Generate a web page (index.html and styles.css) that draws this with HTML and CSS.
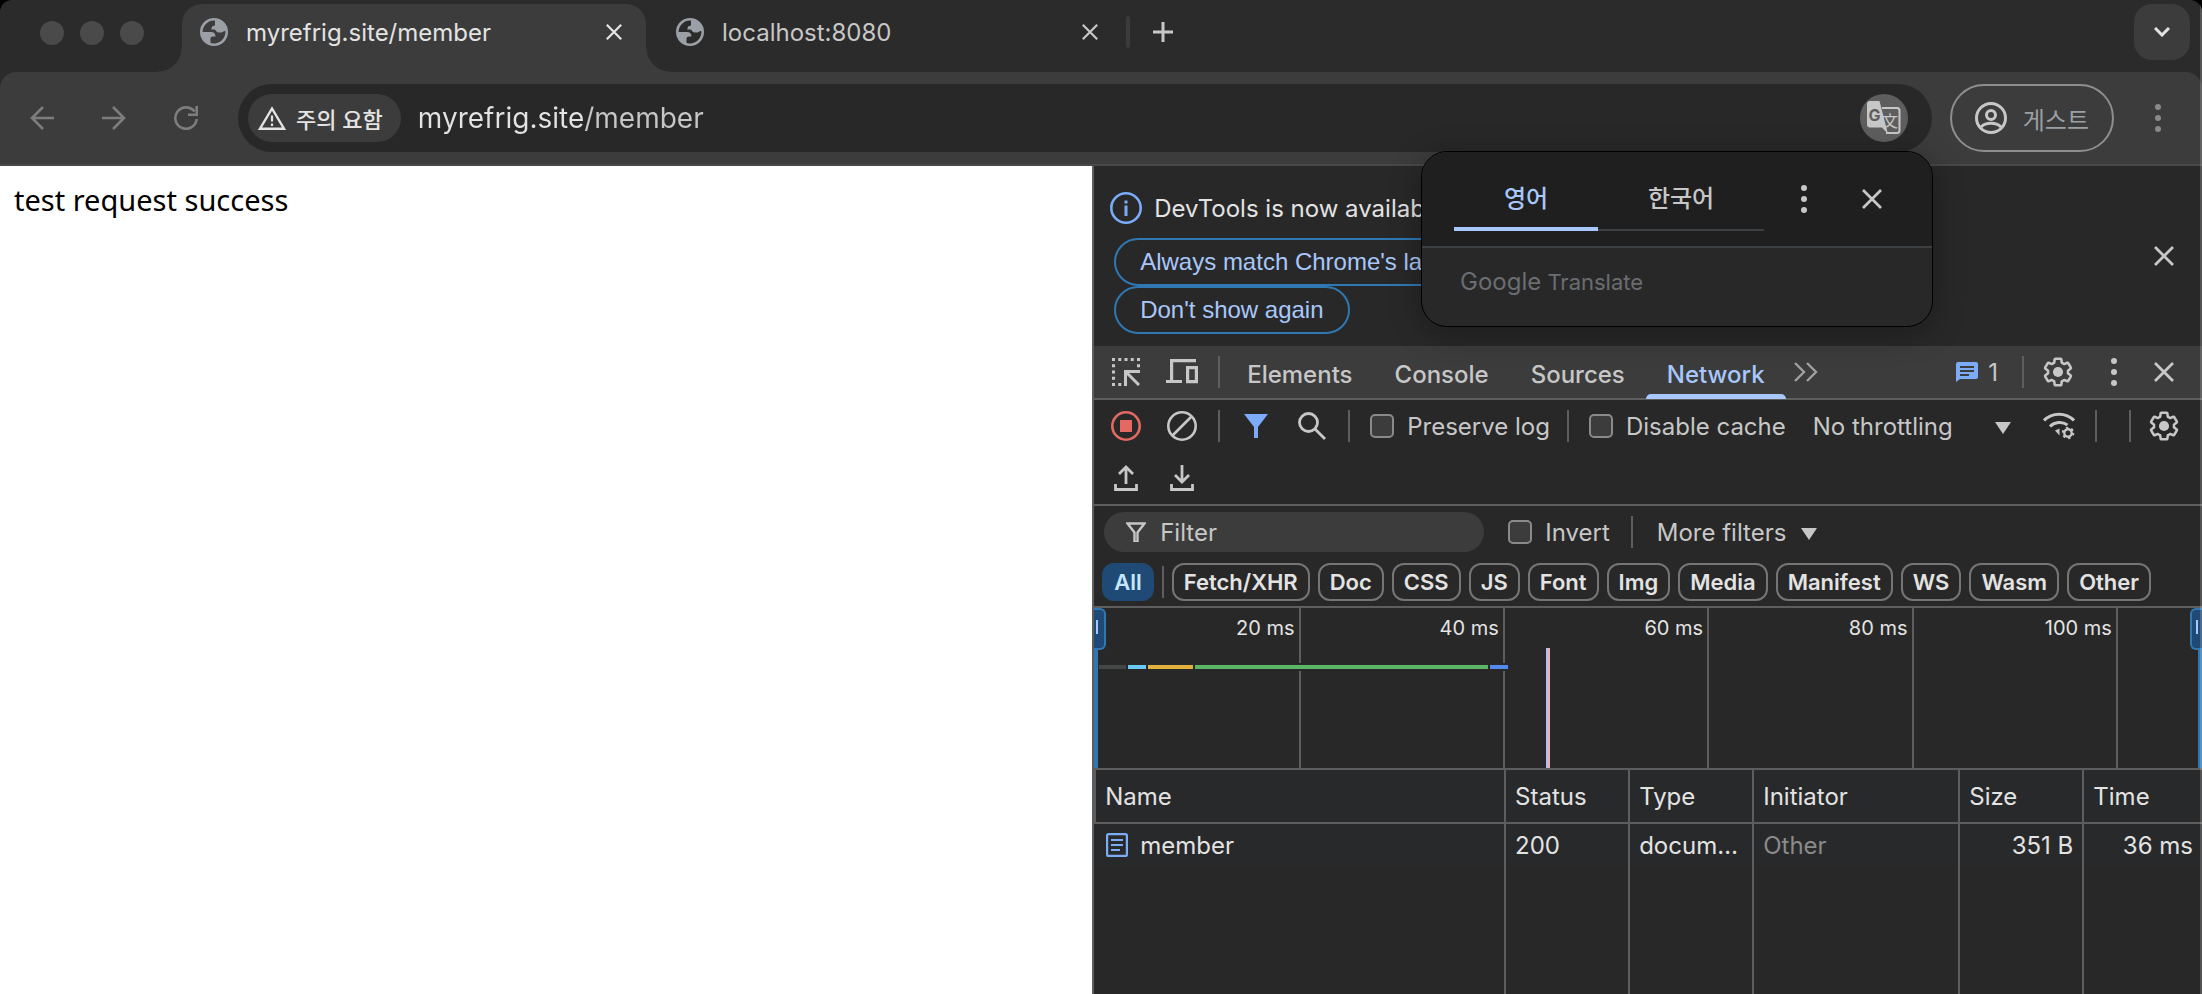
FILE: index.html
```html
<!DOCTYPE html>
<html lang="ko">
<head>
    <meta charset="UTF-8">
    <meta name="viewport" content="width=device-width, initial-scale=1.0">
    <title>myrefrig.site/member</title>
    <link rel="stylesheet" href="styles.css">
</head>
<body>
    <!-- shared icons -->
    <svg class="sprite" aria-hidden="true">
        <symbol id="globe" viewBox="0 0 28 28">
            <circle cx="14" cy="14" r="12.7" fill="none" stroke="currentColor" stroke-width="2.6"/>
            <path fill="currentColor" d="M15 2v4.5c0 1-1 1.5-2 1.5-1.500 0-1 3-2 3.500h3.500c1.500 0 1.500 3 4 3h2.500c2 0 1.500-1.500 5-1.500A12 12 0 0 0 15 2zM1.500 14H11c3 0 4.500 2 4.500 4.500h-2.500c-2 0-2.500 1-2.500 2.500v4.500A12.500 12.500 0 0 1 1.500 14z"/>
        </symbol>
        <symbol id="close" viewBox="0 0 20 20">
            <path d="M1 1l18 18M19 1L1 19" fill="none" stroke="currentColor" stroke-width="2.8"/>
        </symbol>
        <symbol id="kebab" viewBox="0 0 8 28">
            <circle cx="4" cy="3" r="3" fill="currentColor"/>
            <circle cx="4" cy="14" r="3" fill="currentColor"/>
            <circle cx="4" cy="25" r="3" fill="currentColor"/>
        </symbol>
        <symbol id="arrow" viewBox="0 0 24 24">
            <path d="M24 12H2M13 1L2 12l11 11" fill="none" stroke="currentColor" stroke-width="2.6"/>
        </symbol>
        <symbol id="triangle" viewBox="0 0 16 12">
            <path d="M0 0h16L8 12z" fill="currentColor"/>
        </symbol>
        <symbol id="gear" viewBox="0 0 24 24">
            <path fill="none" stroke="currentColor" stroke-width="1.9" stroke-linejoin="round" d="M19.43 12.98c.04-.32.07-.64.07-.98 0-.34-.03-.66-.07-.98l2.11-1.65c.19-.15.24-.42.12-.64l-2-3.46c-.09-.16-.26-.25-.44-.25-.06 0-.12.01-.17.03l-2.49 1c-.52-.4-1.08-.73-1.69-.98l-.38-2.65C14.46 2.18 14.25 2 14 2h-4c-.25 0-.46.18-.49.42l-.38 2.65c-.61.25-1.17.59-1.69.98l-2.49-1c-.06-.02-.12-.03-.18-.03-.17 0-.34.09-.43.25l-2 3.46c-.13.22-.07.49.12.64l2.11 1.65c-.04.32-.07.65-.07.98 0 .33.03.66.07.98l-2.11 1.65c-.19.15-.24.42-.12.64l2 3.46c.09.16.26.25.44.25.06 0 .12-.01.17-.03l2.49-1c.52.4 1.08.73 1.69.98l.38 2.65c.03.24.24.42.49.42h4c.25 0 .46-.18.49-.42l.38-2.65c.61-.25 1.17-.59 1.69-.98l2.49 1c.06.02.12.03.18.03.17 0 .34-.09.43-.25l2-3.46c.12-.22.07-.49-.12-.64z"/>
            <circle cx="12" cy="12" r="3.8" fill="currentColor"/>
        </symbol>
    </svg>

    <header class="browser">
        <div class="tabstrip">
            <div class="lights"><span></span><span></span><span></span></div>
            <div class="tab active">
                <svg class="favicon"><use href="#globe"/></svg>
                <span class="tab-title">myrefrig.site/member</span>
                <button class="tab-close" aria-label="Close tab"><svg><use href="#close"/></svg></button>
            </div>
            <div class="tab">
                <svg class="favicon"><use href="#globe"/></svg>
                <span class="tab-title">localhost:8080</span>
                <button class="tab-close" aria-label="Close tab"><svg><use href="#close"/></svg></button>
            </div>
            <span class="tab-divider"></span>
            <button class="new-tab" aria-label="New tab">
                <svg viewBox="0 0 20 20"><path d="M10 0v20M0 10h20" stroke="currentColor" stroke-width="3"/></svg>
            </button>
            <button class="tab-search" aria-label="Search tabs">
                <svg viewBox="0 0 16 10"><path d="M1 1l7 7 7-7" fill="none" stroke="currentColor" stroke-width="3"/></svg>
            </button>
        </div>
        <div class="toolbar">
            <button class="nav-btn" aria-label="Back"><svg><use href="#arrow"/></svg></button>
            <button class="nav-btn forward" aria-label="Forward"><svg><use href="#arrow"/></svg></button>
            <button class="nav-btn" aria-label="Reload">
                <svg viewBox="0 0 24 24"><path d="M20.5 5.5A10.7 10.7 0 1 0 22.7 13M22.7 0v8.7H14" fill="none" stroke="currentColor" stroke-width="2.6"/></svg>
            </button>
            <div class="omnibox">
                <button class="site-chip">
                    <svg viewBox="0 0 28 24"><path d="M14 2.500L26 22.700H2z" fill="none" stroke="currentColor" stroke-width="2.4"/><path d="M14 9.500v6M14 17.500v2.500" stroke="currentColor" stroke-width="2.2"/></svg>
                    주의 요함
                </button>
                <input class="url" type="text" value="myrefrig.site/member" aria-label="Address">
                <button class="translate-btn" aria-label="Translate">
                    <svg viewBox="0 0 34 34">
                        <path d="M15 7h15a2.500 2.500 0 0 1 2.500 2.500v20a2.500 2.500 0 0 1-2.500 2.500H19" fill="none" stroke="currentColor" stroke-width="2"/>
                        <text x="15" y="26" class="glyph-han">文</text>
                        <path d="M3 0h9.500l8.500 33-6-6.500H3a3 3 0 0 1-3-3V3a3 3 0 0 1 3-3z" fill="currentColor"/>
                        <text x="1.500" y="20" class="glyph-g">G</text>
                    </svg>
                </button>
            </div>
            <button class="profile">
                <svg viewBox="0 0 32 32" fill="none" stroke="currentColor" stroke-width="3"><circle cx="16" cy="16" r="14.500"/><circle cx="16" cy="13" r="4.500"/><path d="M6 25c5-5 15-5 20 0"/></svg>
                게스트
            </button>
            <button class="menu-btn" aria-label="Menu"><svg><use href="#kebab"/></svg></button>
        </div>
    </header>

    <main class="content">
        <section class="page">test request success</section>

        <section class="devtools">
            <div class="infobar">
                <div class="info-body">
                    <p class="info-text">
                        <svg viewBox="0 0 32 32"><circle cx="16" cy="16" r="14.700" fill="none" stroke="currentColor" stroke-width="2.6"/><path d="M16 13.500V24M16 8.500v3" stroke="currentColor" stroke-width="3"/></svg>
                        DevTools is now available in Korean!
                    </p>
                    <button class="pill">Always match Chrome's language</button>
                    <button class="pill">Don't show again</button>
                </div>
                <button class="icon-btn last" aria-label="Close infobar"><svg class="x"><use href="#close"/></svg></button>
            </div>

            <nav class="panel-tabs">
                <button class="icon-btn" aria-label="Inspect">
                    <svg viewBox="0 0 28 28" width="28" height="28" fill="none" stroke="currentColor" stroke-width="3"><path d="M0 1.500h28" stroke-dasharray="3 3.250"/><path d="M1.500 6.250V28M26.500 6.250V10" stroke-dasharray="3 3.250"/><path d="M6.250 26.500H11" stroke-dasharray="3 3"/><path d="M28 13.500H13.500V28M14 14l13 13"/></svg>
                </button>
                <button class="icon-btn" aria-label="Device toolbar">
                    <svg viewBox="0 0 32 26" width="32" height="26" fill="none" stroke="currentColor" stroke-width="3.200"><path d="M30 1.600H5.600V22M0 22.500h16"/><path d="M21.600 8.600h8.800v14h-8.800z"/></svg>
                </button>
                <span class="sep"></span>
                <a class="panel-tab" href="#">Elements</a>
                <a class="panel-tab" href="#">Console</a>
                <a class="panel-tab" href="#">Sources</a>
                <a class="panel-tab selected" href="#">Network</a>
                <button class="more-tabs" aria-label="More tabs">
                    <svg viewBox="0 0 24 20" width="24" height="20"><path d="M1 1l9 9-9 9M13 1l9 9-9 9" fill="none" stroke="currentColor" stroke-width="2.4"/></svg>
                </button>
                <button class="issues">
                    <svg viewBox="0 0 22 20" width="22" height="20"><path d="M2 0h18a2 2 0 0 1 2 2v13a2 2 0 0 1-2 2H4l-4 3V2a2 2 0 0 1 2-2z" fill="#7cacf8"/><path d="M4 5h14M4 9h14M4 13h9" stroke="#3c3c3c" stroke-width="2"/></svg>
                    1
                </button>
                <span class="sep"></span>
                <button class="icon-btn" aria-label="Settings"><svg class="gear"><use href="#gear"/></svg></button>
                <button class="icon-btn" aria-label="More options"><svg class="dots"><use href="#kebab"/></svg></button>
                <button class="icon-btn last" aria-label="Close DevTools"><svg class="x"><use href="#close"/></svg></button>
            </nav>

            <div class="net-tools">
                <div class="tool-row">
                    <button class="icon-btn record" aria-label="Stop recording">
                        <svg viewBox="0 0 30 30" width="30" height="30"><circle cx="15" cy="15" r="13.700" fill="none" stroke="currentColor" stroke-width="2.6"/><path d="M9 9h12v12H9z" fill="currentColor"/></svg>
                    </button>
                    <button class="icon-btn" aria-label="Clear">
                        <svg viewBox="0 0 30 30" width="30" height="30" fill="none" stroke="currentColor" stroke-width="2.6"><circle cx="15" cy="15" r="13.700"/><path d="M5.500 24.500l19-19"/></svg>
                    </button>
                    <span class="sep"></span>
                    <button class="icon-btn filter-on" aria-label="Filter">
                        <svg viewBox="0 0 24 24" width="24" height="24"><path d="M0 0h24l-10 13v11h-4V13z" fill="currentColor"/></svg>
                    </button>
                    <button class="icon-btn" aria-label="Search">
                        <svg viewBox="0 0 28 28" width="28" height="28" fill="none" stroke="currentColor" stroke-width="2.8"><circle cx="10.500" cy="10.500" r="9"/><path d="M17 17l10 10"/></svg>
                    </button>
                    <span class="sep"></span>
                    <label class="check"><input type="checkbox">Preserve log</label>
                    <span class="sep"></span>
                    <label class="check"><input type="checkbox">Disable cache</label>
                    <span class="throttle">
                        <select aria-label="Throttling"><option>No throttling</option></select>
                        <svg><use href="#triangle"/></svg>
                    </span>
                    <button class="icon-btn wifi" aria-label="Network conditions">
                        <svg viewBox="0 0 32 28" width="32" height="28" fill="none" stroke="currentColor" stroke-width="3"><path d="M1 8.500c8-8.500 22-8.500 30 0"/><path d="M7 14.500c5-5 12.500-5 17.500-1.500"/><path d="M12 18.500l4.500-2v7z" fill="currentColor" stroke="none"/><circle cx="25" cy="21" r="3.700" stroke-width="2.400"/><circle cx="25" cy="21" r="5.300" stroke-width="2" stroke-dasharray="2.400 3.150"/></svg>
                    </button>
                    <span class="sep"></span>
                    <span class="sep wide"></span>
                    <button class="icon-btn last" aria-label="Network settings"><svg class="gear"><use href="#gear"/></svg></button>
                </div>
                <div class="tool-row">
                    <button class="icon-btn" aria-label="Import HAR">
                        <svg viewBox="0 0 24 26" width="24" height="26" fill="none" stroke="currentColor" stroke-width="2.8"><path d="M12 19V2M5 9l7-7 7 7M1.500 19v5.500h21V19"/></svg>
                    </button>
                    <button class="icon-btn" aria-label="Export HAR">
                        <svg viewBox="0 0 24 26" width="24" height="26" fill="none" stroke="currentColor" stroke-width="2.8"><path d="M12 0v17M5 10l7 7 7-7M1.500 19v5.500h21V19"/></svg>
                    </button>
                </div>
            </div>

            <div class="filters">
                <div class="filter-row">
                    <label class="filter-box">
                        <svg viewBox="0 0 20 20" width="20" height="20"><path d="M1.500 1.500h17l-7 9V20h-3v-9.500z" fill="none" stroke="currentColor" stroke-width="2.4"/></svg>
                        <input type="text" placeholder="Filter" aria-label="Filter">
                    </label>
                    <label class="check"><input type="checkbox">Invert</label>
                    <span class="sep"></span>
                    <button class="more-filters">More filters <svg><use href="#triangle"/></svg></button>
                </div>
                <div class="chips">
                    <button class="chip on">All</button>
                    <span class="sep"></span>
                    <button class="chip">Fetch/XHR</button>
                    <button class="chip">Doc</button>
                    <button class="chip">CSS</button>
                    <button class="chip">JS</button>
                    <button class="chip">Font</button>
                    <button class="chip">Img</button>
                    <button class="chip">Media</button>
                    <button class="chip">Manifest</button>
                    <button class="chip">WS</button>
                    <button class="chip">Wasm</button>
                    <button class="chip">Other</button>
                </div>
            </div>

            <div class="overview">
                <div class="tick">20 ms</div>
                <div class="tick">40 ms</div>
                <div class="tick">60 ms</div>
                <div class="tick">80 ms</div>
                <div class="tick">100 ms</div>
                <div class="timing">
                    <span class="bar queue" style="width: 2.6%"></span>
                    <span class="bar dns" style="width: 1.8%"></span>
                    <span class="bar connect" style="width: 4.3%"></span>
                    <span class="bar wait" style="width: 26.7%"></span>
                    <span class="bar download" style="width: 1.8%"></span>
                </div>
                <span class="load-line" style="left: 40.8%"></span>
                <span class="handle left"></span>
                <span class="handle right"></span>
            </div>

            <table class="requests">
                <colgroup>
                    <col class="c-name"><col class="c-status"><col class="c-type"><col class="c-init"><col class="c-size"><col class="c-time">
                </colgroup>
                <thead>
                    <tr><th>Name</th><th>Status</th><th>Type</th><th>Initiator</th><th>Size</th><th>Time</th></tr>
                </thead>
                <tbody>
                    <tr class="request">
                        <td>
                            <span class="file">
                                <svg viewBox="0 0 22 24" width="22" height="24" fill="none" stroke="currentColor" stroke-width="2.200"><rect x="1.100" y="1.100" width="19.800" height="21.800" rx="1.500"/><path d="M5 7h12M5 12h12M5 17h9"/></svg>
                                member
                            </span>
                        </td>
                        <td>200</td><td>document</td><td class="muted">Other</td><td class="num">351 B</td><td class="num">36 ms</td>
                    </tr>
                    <tr class="filler"><td></td><td></td><td></td><td></td><td></td><td></td></tr>
                </tbody>
            </table>
        </section>
    </main>

    <div class="popup">
        <div class="popup-head">
            <div class="langs">
                <button class="lang current">영어</button>
                <button class="lang">한국어</button>
            </div>
            <button class="icon-btn" aria-label="Options"><svg class="dots"><use href="#kebab"/></svg></button>
            <button class="icon-btn" aria-label="Close"><svg class="x"><use href="#close"/></svg></button>
        </div>
        <div class="popup-foot"><b>Google</b> Translate</div>
    </div>
</body>
</html>
```

FILE: styles.css
```css
* {
    box-sizing: border-box;
}
html {
    background: #000;
}
body {
    margin: 0;
    height: 100vh;
    display: flex;
    flex-direction: column;
    position: relative;
    overflow: hidden;
    background: #2b2b2b;
    border-radius: 12px 12px 0 0;
    font-family: Inter, "Noto Sans CJK KR", sans-serif;
    font-size: 24px;
    color: #c7c7c7;
}
/* window edge */
body::after {
    content: "";
    position: absolute;
    top: 0;
    right: 0;
    bottom: 0;
    width: 2px;
    background: rgba(255, 255, 255, 0.2);
}
.sprite {
    position: absolute;
    width: 0;
    height: 0;
}
svg {
    display: block;
    flex: none;
}
button, input, select {
    font: inherit;
    color: inherit;
    background: none;
    border: none;
    padding: 0;
    margin: 0;
}
button {
    display: flex;
    align-items: center;
    justify-content: center;
    white-space: nowrap;
}
a {
    color: inherit;
    text-decoration: none;
}

/* tab strip */
.tabstrip {
    display: flex;
    height: 72px;
    padding: 4px 12px 0 40px;
}
.lights {
    display: flex;
    gap: 16px;
    width: 142px;
    padding-top: 17px;
}
.lights span {
    width: 24px;
    height: 24px;
    border-radius: 50%;
    background: #4a4a4a;
}
.tab {
    position: relative;
    display: flex;
    align-items: center;
    width: 464px;
    height: 68px;
    padding: 0 24px 12px 18px;
}
.tab + .tab {
    margin-left: 12px;
}
.tab.active {
    background: #3c3c3c;
    border-radius: 20px 20px 0 0;
    color: #e3e3e3;
}
.tab.active::before, .tab.active::after {
    content: "";
    position: absolute;
    bottom: 0;
    width: 24px;
    height: 24px;
}
.tab.active::before {
    right: 100%;
    background: radial-gradient(circle at 0 0, transparent 23px, #3c3c3c 24px);
}
.tab.active::after {
    left: 100%;
    background: radial-gradient(circle at 100% 0, transparent 23px, #3c3c3c 24px);
}
.favicon {
    width: 28px;
    height: 28px;
    margin-right: 18px;
    color: #9aa0a6;
}
.tab-title {
    flex: 1;
}
.tab-close svg {
    width: 16px;
    height: 16px;
    stroke-width: 3;
}
.tab-divider {
    width: 4px;
    height: 32px;
    margin: 12px 20px 0 4px;
    border-radius: 2px;
    background: #3c3c3c;
}
.new-tab {
    width: 26px;
    height: 56px;
}
.new-tab svg {
    width: 20px;
    height: 20px;
}
.tab-search {
    width: 56px;
    height: 56px;
    margin-left: auto;
    border-radius: 18px;
    background: #3c3c3c;
    color: #e3e3e3;
}
.tab-search svg {
    width: 16px;
    height: 10px;
}

/* toolbar */
.toolbar {
    display: flex;
    align-items: center;
    height: 94px;
    padding: 0 40px 0 30px;
    background: #3c3c3c;
    border-bottom: 2px solid #484848;
    border-radius: 16px 16px 0 0;
}
.nav-btn {
    width: 24px;
    margin-right: 48px;
    color: #7d7d7d;
}
.nav-btn:nth-child(3) {
    margin-right: 40px;
}
.nav-btn svg {
    width: 24px;
    height: 24px;
}
.forward svg {
    transform: scaleX(-1);
}
.omnibox {
    flex: 1;
    display: flex;
    align-items: center;
    height: 68px;
    padding: 0 24px 0 10px;
    border-radius: 34px;
    background: #282828;
}
.site-chip {
    gap: 10px;
    height: 48px;
    padding: 0 18px 0 10px;
    border-radius: 24px;
    background: #3c3c3c;
    color: #e3e3e3;
    font-size: 22px;
    font-weight: 500;
}
.site-chip svg {
    width: 28px;
    height: 24px;
}
.url {
    flex: 1;
    padding-left: 17px;
    font-size: 28px;
    /* host is brighter than the path */
    background: linear-gradient(90deg, #e3e3e3 182px, #c7c7c7 182px);
    -webkit-background-clip: text;
    background-clip: text;
    -webkit-text-fill-color: transparent;
}
.translate-btn {
    width: 48px;
    height: 48px;
    border-radius: 50%;
    background: #5e5e5e;
}
.translate-btn svg {
    width: 34px;
    height: 34px;
}
.glyph-g {
    font-size: 16px;
    font-weight: 700;
    fill: #5e5e5e;
}
.glyph-han {
    font-size: 16px;
    fill: #c7c7c7;
}
.profile {
    gap: 16px;
    height: 68px;
    margin: 0 40px 0 18px;
    padding: 0 23px;
    border: 2px solid #8e8e8e;
    border-radius: 34px;
    color: #9aa0a6;
}
.profile svg {
    width: 32px;
    height: 32px;
    color: #c7c7c7;
}
.menu-btn {
    color: #8a8a8a;
}
.menu-btn svg, .dots {
    width: 8px;
    height: 28px;
}

/* content */
.content {
    flex: 1;
    display: flex;
    min-height: 0;
}
.page {
    width: 49.6%;
    padding: 14px;
    background: #fff;
    color: #000;
    font-family: "Noto Sans", sans-serif;
    font-size: 29px;
    line-height: 40px;
}
.devtools {
    flex: 1;
    min-width: 0;
    display: flex;
    flex-direction: column;
    background: #282828;
    border-left: 2px solid #5e5e5e;
}
.icon-btn {
    width: 56px;
    height: 40px;
    flex: none;
}
.icon-btn.last {
    width: 44px;
}
.x {
    width: 20px;
    height: 20px;
}
.gear {
    width: 32px;
    height: 32px;
}
.sep {
    width: 2px;
    height: 32px;
    flex: none;
    background: #5e5e5e;
}

.infobar {
    display: flex;
    align-items: center;
    justify-content: space-between;
    height: 180px;
    padding: 0 16px;
}
.info-text {
    display: flex;
    align-items: center;
    gap: 12px;
    height: 60px;
    margin: 0;
    color: #e3e3e3;
    white-space: nowrap;
}
.info-text svg {
    width: 32px;
    height: 32px;
    color: #7cacf8;
}
.pill {
    height: 48px;
    margin-left: 4px;
    padding: 0 24px;
    border: 2px solid #2f78b3;
    border-radius: 24px;
    color: #a8c7fa;
    font-family: "Liberation Sans", Arial, sans-serif;
}

.panel-tabs {
    display: flex;
    align-items: center;
    height: 54px;
    padding: 0 16px 0 4px;
    background: #3c3c3c;
    border-bottom: 2px solid #5e5e5e;
    font-weight: 500;
}
.panel-tabs .sep {
    margin: 0 6px 0 8px;
}
.panel-tab {
    display: flex;
    align-items: center;
    height: 54px;
    padding: 4px 21px 0;
}
.panel-tab.selected {
    position: relative;
    color: #a8c7fa;
}
.panel-tab.selected::after {
    content: "";
    position: absolute;
    left: 0;
    right: 0;
    bottom: 0;
    height: 5px;
    border-radius: 6px 6px 0 0;
    background: #a8c7fa;
}
.more-tabs {
    margin-left: 8px;
    color: #a0a0a0;
}
.issues {
    gap: 10px;
    margin: 0 16px 0 auto;
    font-weight: 400;
}

.tool-row {
    display: flex;
    align-items: center;
    height: 52px;
    padding: 0 16px 0 4px;
}
.net-tools {
    height: 106px;
    border-bottom: 2px solid #5e5e5e;
}
.net-tools .sep {
    margin: 0 8px;
}
.net-tools .wide {
    margin-left: 24px;
}
.record {
    color: #e46962;
}
.filter-on {
    color: #7cacf8;
}
.check {
    display: flex;
    align-items: center;
    gap: 13px;
    padding: 0 9px 0 12px;
    white-space: nowrap;
}
.check input {
    appearance: none;
    width: 24px;
    height: 24px;
    border: 2px solid #8a8a8a;
    border-radius: 5px;
    background: #3c3c3c;
}
.throttle {
    display: flex;
    align-items: center;
    justify-content: space-between;
    width: 198px;
    margin-left: 18px;
}
.throttle select {
    appearance: none;
}
.throttle svg, .more-filters svg {
    width: 16px;
    height: 12px;
    margin-top: 4px;
}
.wifi {
    margin-left: 20px;
}
.tool-row .last {
    margin-left: auto;
}

.filters {
    height: 102px;
    border-bottom: 2px solid #5e5e5e;
}
.filter-row {
    display: flex;
    align-items: center;
    height: 52px;
    padding-left: 10px;
}
.filter-box {
    display: flex;
    align-items: center;
    gap: 14px;
    width: 380px;
    height: 40px;
    margin-right: 12px;
    padding: 0 22px;
    border-radius: 20px;
    background: #3c3c3c;
}
.filter-box input {
    flex: 1;
    min-width: 0;
}
.filter-box input::placeholder {
    color: #c7c7c7;
}
.filter-row .sep {
    margin: 0 24px 0 12px;
}
.more-filters {
    gap: 15px;
}
.chips {
    display: flex;
    align-items: center;
    gap: 8px;
    height: 48px;
    padding: 0 8px;
}
.chip {
    height: 38px;
    padding: 0 10px;
    border: 2px solid #757575;
    border-radius: 12px;
    color: #e3e3e3;
    font-size: 22px;
    font-weight: 600;
}
.chip.on {
    border-color: #1f4a75;
    background: #1f4a75;
    color: #c2e7ff;
}

.overview {
    position: relative;
    display: grid;
    grid-template-columns: 206fr repeat(4, 204fr) 84fr;
    height: 162px;
    border-bottom: 2px solid #5e5e5e;
}
.tick {
    padding: 8px 4px 0 0;
    border-right: 2px solid #5e5e5e;
    color: #e3e3e3;
    font-size: 20px;
    line-height: 24px;
    text-align: right;
}
.timing {
    position: absolute;
    left: 4px;
    right: 0;
    top: 55px;
    display: flex;
    height: 8px;
}
.bar {
    border: 1px solid #282828;
    border-width: 2px 1px;
}
.queue {
    background: #444746;
}
.dns {
    background: #6cc8f5;
}
.connect {
    background: #e2b03c;
}
.wait {
    background: #5bb765;
}
.download {
    background: #5489f0;
}
.load-line {
    position: absolute;
    top: 40px;
    bottom: 0;
    width: 4px;
    background: linear-gradient(90deg, #b5bdf0 50%, #eab4b4 50%);
}
.handle {
    position: absolute;
    top: 0;
    bottom: 0;
    width: 4px;
    background: #2f78b3;
}
.handle::before {
    content: "";
    position: absolute;
    top: 0;
    width: 10px;
    height: 38px;
    border: 2px solid #2f78b3;
    background: linear-gradient(#a8c7fa, #a8c7fa) 2px 10px / 2px 14px no-repeat #1f4a75;
}
.left {
    left: 0;
}
.left::before {
    left: 0;
    border-left: none;
    border-radius: 0 6px 6px 0;
}
.right {
    right: 0;
}
.right::before {
    right: 0;
    border-right: none;
    border-radius: 6px 0 0 6px;
    background-position: 4px 10px;
}

.requests {
    flex: 1;
    width: 100%;
    table-layout: fixed;
    border-collapse: separate;
    border-spacing: 0;
    color: #e3e3e3;
}
.c-name {
    width: 37%;
}
.c-status, .c-type, .c-size {
    width: 11.2%;
}
.c-init {
    width: 18.6%;
}
th, td {
    height: 42px;
    padding: 0 9px;
    border-left: 2px solid #5e5e5e;
    font-weight: 400;
    text-align: left;
    white-space: nowrap;
    overflow: hidden;
    text-overflow: ellipsis;
}
th {
    height: 54px;
    background: #28292a;
    border-bottom: 2px solid #5e5e5e;
}
td:first-child {
    border-left: none;
    padding-left: 12px;
}
.request td {
    background: #28292a;
}
.filler td {
    height: auto;
}
td.num {
    text-align: right;
}
td.muted {
    color: #8a8a8a;
}
.file {
    display: flex;
    align-items: center;
    gap: 12px;
}
.file svg {
    color: #7cacf8;
}

/* translate bubble */
.popup {
    position: absolute;
    top: 151px;
    right: 269px;
    width: 512px;
    border: 1px solid #000;
    border-radius: 26px;
    background: #282828;
    box-shadow: 0 6px 32px rgba(0, 0, 0, 0.3);
    overflow: hidden;
}
.popup-head {
    display: flex;
    align-items: center;
    height: 96px;
    padding-left: 32px;
    background: #1f1f1f;
    border-bottom: 2px solid #3c4043;
}
.langs {
    display: flex;
    height: 64px;
    margin-right: 12px;
}
.lang {
    width: 166px;
    padding-bottom: 4px;
    border-bottom: 2px solid #3c4043;
    font-weight: 500;
}
.lang.current {
    width: 144px;
    padding-bottom: 2px;
    border-bottom: 4px solid #a8c7fa;
    color: #a8c7fa;
}
.popup .icon-btn + .icon-btn {
    margin-left: 12px;
}
.popup-foot {
    height: 78px;
    padding: 20px 38px;
    color: #6a6d71;
    font-size: 22px;
    line-height: 28px;
}
.popup-foot b {
    font-size: 24px;
    font-weight: 400;
}
```
